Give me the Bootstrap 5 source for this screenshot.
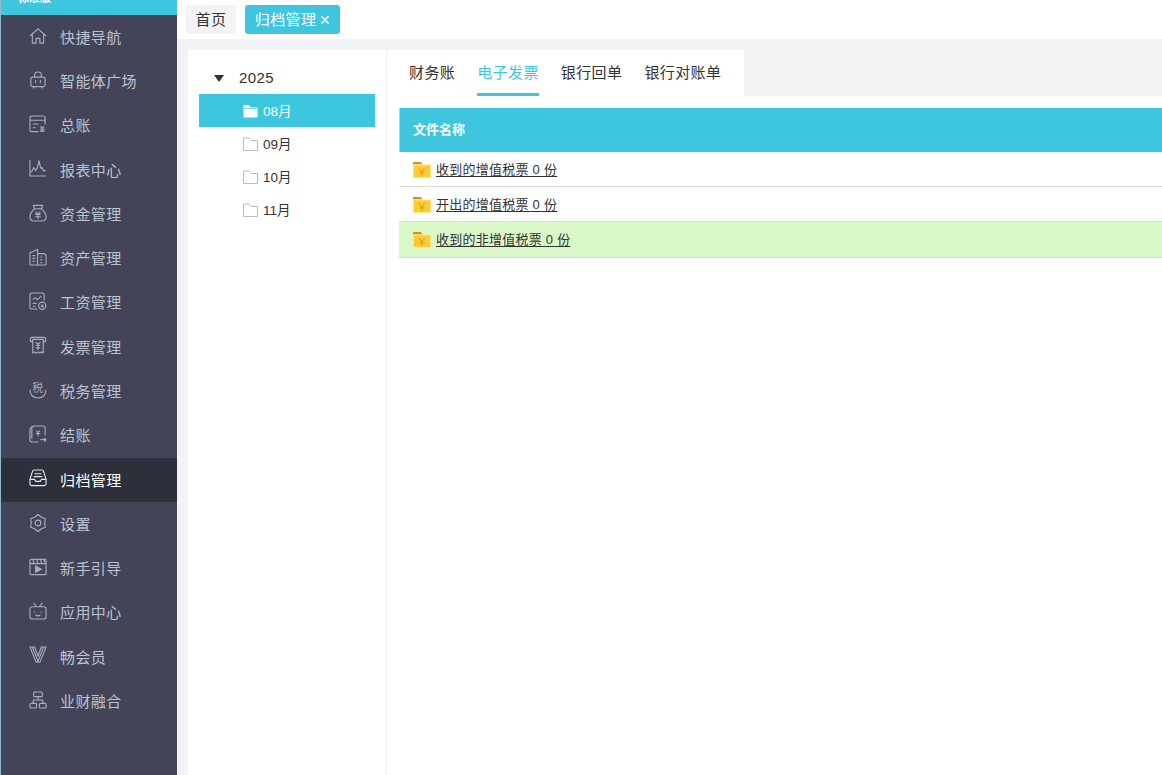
<!DOCTYPE html>
<html lang="zh-CN"><head><meta charset="utf-8"><title>归档管理</title>
<link href="https://cdn.jsdelivr.net/npm/bootstrap@5.3.0/dist/css/bootstrap.min.css" rel="stylesheet">
<style>
html,body{height:775px;overflow:hidden}
body{font-family:"Liberation Sans","Noto Sans CJK SC",sans-serif;background:#f2f3f5;color:#333;font-size:14px}
.shell{height:775px;width:1162px}
.side{width:177px;flex:none;background:#434458;border-left:1px solid #8fb8cc;overflow:hidden}
.side-top{height:15px;background:#3ec6de;color:#fff;font-weight:700;font-size:11px;padding:0 0 9px 17px;overflow:hidden;line-height:15px}
.side-item{height:44.27px;padding-left:28px;padding-top:2px;gap:13px;color:#b9c4d0;font-size:15px;letter-spacing:.4px}
.side-item svg{width:18px;height:18px;flex:none;fill:none;stroke:#a9adb9;stroke-width:1.2;stroke-linejoin:round;margin-top:-5px}
.side-item.on{background:#2d2f3b;color:#fff}
.side-item.on svg{stroke:#e6e8ec}
.mainx{min-width:0}
.topbar{height:39px;background:#fff;padding:5px 0 0 9px;gap:9px;font-size:15px;letter-spacing:.4px}
.tabx{height:29px;padding:2px 9.500px 0;border-radius:3px;background:#f2f3f5;color:#333}
.tabx.on{background:#3ec6de;color:#fff;padding:2px 10px 0 10px}
.tabx i{font-style:normal;font-size:18px;line-height:1;margin:-2px 0 0 3px;letter-spacing:0}
.bodyx{padding:11px 0 0 11px}
.treex{width:199px;flex:none;background:#fff;border-right:1px solid #eef0f2;padding:11px 11px 0 11px}
.yearx{height:33px;padding-left:15px;padding-top:1px;gap:15px;font-size:15px;letter-spacing:.4px;color:#333}
.arrow{width:0;height:0;border-left:5.500px solid transparent;border-right:5.500px solid transparent;border-top:7px solid #333}
.monthx{height:33px;padding-left:44px;padding-top:3px;gap:5px;font-size:13.500px;color:#333}
.monthx svg{width:15px;height:14px;flex:none;margin-top:-3px}
.monthx.on{background:#3ec6de;color:#fff}
.paneb{min-width:0;background:#fff}
.tabsx{height:46px;background:#f2f3f5}
.tabsin{width:357px;background:#fff;padding-left:22px;gap:22px;font-size:15px;letter-spacing:.4px}
.tabsin a{height:46px;line-height:46px;color:#333;text-decoration:none;border-bottom:3px solid transparent}
.tabsin a.on{color:#3ec6de;border-bottom-color:#3ec6de}
.wrapx{padding:12px 0 0 12px}
.headx{height:44px;background:#3ec6de;color:#fff;font-weight:700;font-size:13px;padding-left:13px;border-left:1px solid #c9ccd0}
.rowx{padding-left:14px;padding-top:2px;gap:5px;border-bottom:1px solid #dcdee0;font-size:13px;letter-spacing:.25px;height:35px}
.rowx.hi{height:36px;padding-top:0;background:#daf7c8;border-bottom-color:#d5dfcf}
.rowx a{color:#333;text-decoration:underline;text-underline-offset:2px}
.rowx svg{width:18px;height:16px;flex:none}
</style></head><body>
<div class="shell d-flex">
<nav class="side d-flex flex-column">
<div class="side-top d-flex align-items-end">标准版</div>
<div class="side-item d-flex align-items-center"><svg viewBox="0 0 19 19"><path d="M1 9.500 9.500 2l8.500 7.500M3.500 8v9h4v-5h4v5h4V8"/></svg>快捷导航</div>
<div class="side-item d-flex align-items-center"><svg viewBox="0 0 19 19"><rect x="2" y="6.500" width="15" height="10" rx="2"/><path d="M6 6.500V4a3.500 3 0 0 1 7 0v2.500M7 9.500V13M12 9.500V13M5 16.500V18.500M14 16.500V18.500"/></svg>智能体广场</div>
<div class="side-item d-flex align-items-center"><svg viewBox="0 0 19 19"><path d="M10 17.500H2.500A1.500 1.500 0 0 1 1 16V3a2 2 0 0 1 2-2h12a2 2 0 0 1 2 2v7M1 5.500h16M4 9.500h6M4 13.500h3M12 12l2 2 2-2M11.500 15h5M11.500 17h5M14 14v4"/></svg>总账</div>
<div class="side-item d-flex align-items-center"><svg viewBox="0 0 19 19"><path d="M1 1v17h17M2.500 14l2.500-5 2 3 2-3 1.500-7 2 8 1.500-1 1 3.500 2.500-.5"/></svg>报表中心</div>
<div class="side-item d-flex align-items-center"><svg viewBox="0 0 19 19"><path d="M6 5 4.500 1.500h10L13 5M6 5h7c2.500 2 5 5 5 8.500 0 3-2 4.500-4 4.500H5c-2 0-4-1.500-4-4.500C1 10 3.500 7 6 5ZM7 8l2.500 3L12 8M6.500 11h6M6.500 13.500h6M9.500 11v5"/></svg>资金管理</div>
<div class="side-item d-flex align-items-center"><svg viewBox="0 0 19 19"><path d="M1 18V5l8-3.500V18M9 6h6a3 3 0 0 1 3 3v9M1 18h17M3.500 8h3M3.500 11h3M3.500 14h3M12 9.500h2M12 12.500h2M12 15.500h2"/></svg>资产管理</div>
<div class="side-item d-flex align-items-center"><svg viewBox="0 0 19 19"><path d="M9 18H3a2 2 0 0 1-2-2V3a2 2 0 0 1 2-2h11a2 2 0 0 1 2 2v6M4 8l3-2 2 2 4-4M4 12h4M4 15h3"/><circle cx="14" cy="14.500" r="3.800"/><path d="M12.500 14h3M12.500 15.500h3"/></svg>工资管理</div>
<div class="side-item d-flex align-items-center"><svg viewBox="0 0 19 19"><path d="M4 6H1.500V3A1.500 1.500 0 0 1 3 1.500h13A1.500 1.500 0 0 1 17.500 3v3H15M4 3.500V18l2-1.200 1.500 1.200L9.500 17l2 1 1.500-1.200 2 1.200V3.500ZM7 6.500l2.500 2.500L12 6.500M7 10h5M7 12.500h5M9.500 9v6"/></svg>发票管理</div>
<div class="side-item d-flex align-items-center"><svg viewBox="0 0 19 19"><path d="M1 9c0 5.500 3.500 9 8.500 9S18 14.500 18 9"/><text x="9.500" y="12" text-anchor="middle" font-size="11.500" fill="#a9adb9" stroke="none">税</text></svg>税务管理</div>
<div class="side-item d-flex align-items-center"><svg viewBox="0 0 19 19"><path d="M3 14.500V3.500A2.500 2.500 0 0 1 5.500 1h9A2.500 2.500 0 0 1 17 3.500V11M5 1.500C2.500 2 1 3 1 5v10.500A2.500 2.500 0 0 0 3.500 18H10M7.500 6l2 2 2-2M7 9h5M9.500 8v4M12 15.500h6M16 13.500l2 2-2 2"/></svg>结账</div>
<div class="side-item on d-flex align-items-center"><svg viewBox="0 0 19 19"><path d="M1 11 3.500 3A2.500 2.500 0 0 1 6 1h7a2.500 2.500 0 0 1 2.500 2L18 11v4.500a2 2 0 0 1-2 2H3a2 2 0 0 1-2-2ZM1 11h5l1 2h5l1-2h5M6 5h7M5 8h9"/></svg>归档管理</div>
<div class="side-item d-flex align-items-center"><svg viewBox="0 0 19 19"><path d="M9.500 .5 13 3.400 17.300 5 16.500 9.500 17.300 14 13 15.600 9.500 18.500 6 15.600 1.700 14 2.500 9.500 1.700 5 6 3.400Z"/><circle cx="9.500" cy="9.500" r="3"/></svg>设置</div>
<div class="side-item d-flex align-items-center"><svg viewBox="0 0 19 19"><rect x="1" y="1.500" width="17" height="16" rx="1"/><path d="M1 6h17M4 1.500 5.500 6M8 1.500 9.500 6M12 1.500 13.500 6M15.500 1.500 17 5"/><path d="M7 8.500V15l6-3.200Z" fill="#a9adb9"/></svg>新手引导</div>
<div class="side-item d-flex align-items-center"><svg viewBox="0 0 19 19"><rect x="1" y="5" width="17" height="13" rx="2.500"/><path d="m5 1 3 4M14 1l-3 4M6 10v1M13 10v1M7 13.500c1.500 1.300 3.500 1.300 5 0"/></svg>应用中心</div>
<div class="side-item d-flex align-items-center"><svg viewBox="0 0 19 19"><path d="M1 1h5l3.500 10L13 1h5l-6.500 16h-4ZM3.500 1l6 15M15.500 1l-6 15"/></svg>畅会员</div>
<div class="side-item d-flex align-items-center"><svg viewBox="0 0 19 19"><rect x="5" y="1" width="9" height="5" rx="1"/><rect x="1" y="13" width="7" height="5" rx="1"/><rect x="11" y="13" width="7" height="5" rx="1"/><path d="M9.500 6v3.500M4.500 13V9.500h10V13"/></svg>业财融合</div>
</nav>
<div class="mainx flex-grow-1 d-flex flex-column">
<div class="topbar d-flex">
<div class="tabx d-flex align-items-center">首页</div>
<div class="tabx on d-flex align-items-center">归档管理<i>×</i></div>
</div>
<div class="bodyx flex-grow-1 d-flex">
<aside class="treex">
<div class="yearx d-flex align-items-center"><span class="arrow"></span>2025</div>
<div class="monthx on d-flex align-items-center"><svg viewBox="0 0 15 14"><path d="M.5 1h5.500l2 2.500h6.500V13.500H.5Z" fill="#fff"/><path d="M1.500 2.500v2h12" fill="none" stroke="#3ec6de" stroke-width=".6"/></svg>08月</div>
<div class="monthx d-flex align-items-center"><svg viewBox="0 0 15 14"><path d="M.5 1h5.500l2 2.500h6.500V13.500H.5Z" fill="#fff" stroke="#bbb"/></svg>09月</div>
<div class="monthx d-flex align-items-center"><svg viewBox="0 0 15 14"><path d="M.5 1h5.500l2 2.500h6.500V13.500H.5Z" fill="#fff" stroke="#bbb"/></svg>10月</div>
<div class="monthx d-flex align-items-center"><svg viewBox="0 0 15 14"><path d="M.5 1h5.500l2 2.500h6.500V13.500H.5Z" fill="#fff" stroke="#bbb"/></svg>11月</div>
</aside>
<section class="paneb flex-grow-1">
<div class="tabsx"><div class="tabsin d-flex h-100">
<a href="#">财务账</a><a href="#" class="on">电子发票</a><a href="#">银行回单</a><a href="#">银行对账单</a>
</div></div>
<div class="wrapx">
<div class="headx d-flex align-items-center">文件名称</div>
<div class="rowx d-flex align-items-center"><svg viewBox="0 0 18 16"><path d="M0 0h8l1.500 2.500H0Z" fill="#c9971e"/><rect x=".5" y="3" width="17" height="12.500" fill="#ffcb2f" stroke="#ffe68a"/><text x="9" y="13.500" text-anchor="middle" font-size="11" fill="#d9a21c">¥</text></svg><a href="#">收到的增值税票 0 份</a></div>
<div class="rowx d-flex align-items-center"><svg viewBox="0 0 18 16"><path d="M0 0h8l1.500 2.500H0Z" fill="#c9971e"/><rect x=".5" y="3" width="17" height="12.500" fill="#ffcb2f" stroke="#ffe68a"/><text x="9" y="13.500" text-anchor="middle" font-size="11" fill="#d9a21c">¥</text></svg><a href="#">开出的增值税票 0 份</a></div>
<div class="rowx hi d-flex align-items-center"><svg viewBox="0 0 18 16"><path d="M0 0h8l1.500 2.500H0Z" fill="#c9971e"/><rect x=".5" y="3" width="17" height="12.500" fill="#ffcb2f" stroke="#ffe68a"/><text x="9" y="13.500" text-anchor="middle" font-size="11" fill="#d9a21c">¥</text></svg><a href="#">收到的非增值税票 0 份</a></div>
</div>
</section>
</div>
</div>
</div>
</body></html>
